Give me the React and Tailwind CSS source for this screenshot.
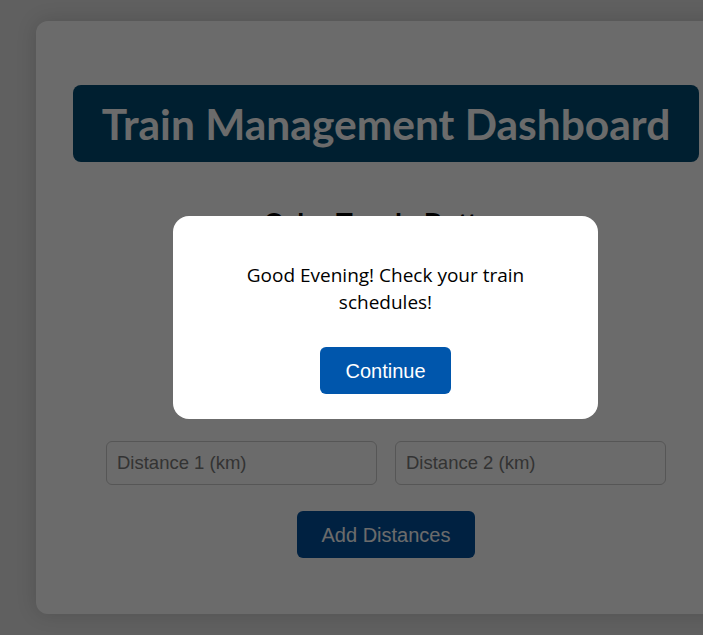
import React from 'react';

const App = () => {
  return (
    <div className="relative w-[703px] h-[635px] overflow-hidden bg-[#e4e4e4]">
      <div
        className="ml-[36px] mt-[21px] w-[700px] h-[593px] bg-white rounded-xl shadow-[0_0_20px_rgba(0,0,0,0.15)] px-[37px] pt-[64px]"
        style={{ fontFamily: 'Lato, "Open Sans", sans-serif' }}
      >
        <h1 className="h-[77px] bg-[#004a72] rounded-lg flex items-center justify-center text-white text-[42.5px] font-bold">
          Train Management Dashboard
        </h1>
        <h2 className="mt-[40px] text-center text-[28px] font-bold text-black">Color Toggle Button</h2>
        <div className="h-[197px]" />
        <div className="flex justify-center gap-[18px]" style={{ fontFamily: '"Liberation Sans", Arial, sans-serif' }}>
          <input
            className="w-[271px] h-[44px] border border-[#ccc] rounded-md px-[10px] text-[18.5px] placeholder:text-[#7a7a7a]"
            placeholder="Distance 1 (km)"
          />
          <input
            className="w-[271px] h-[44px] border border-[#ccc] rounded-md px-[10px] text-[18.5px] placeholder:text-[#7a7a7a]"
            placeholder="Distance 2 (km)"
          />
        </div>
        <div className="flex justify-center mt-[26px]">
          <button
            className="w-[178px] h-[47px] bg-[#004f9c] text-white rounded-md text-[20px]"
            style={{ fontFamily: '"Liberation Sans", Arial, sans-serif' }}
          >
            Add Distances
          </button>
        </div>
      </div>

      <div className="absolute inset-0 bg-black/[0.58]" />

      <div
        className="absolute left-[173px] top-[216px] w-[425px] h-[203px] bg-white rounded-2xl px-[40px] pt-[46px] flex flex-col items-center"
        style={{ fontFamily: '"Open Sans", Lato, sans-serif' }}
      >
        <p className="max-w-[330px] text-[19px] leading-[27px] text-black text-center">
          Good Evening! Check your train schedules!
        </p>
        <button
          className="mt-[31px] w-[131px] h-[47px] bg-[#0056ac] text-white rounded-md text-[20px]"
          style={{ fontFamily: '"Liberation Sans", Arial, sans-serif' }}
        >
          Continue
        </button>
      </div>
    </div>
  );
};

export default App;
